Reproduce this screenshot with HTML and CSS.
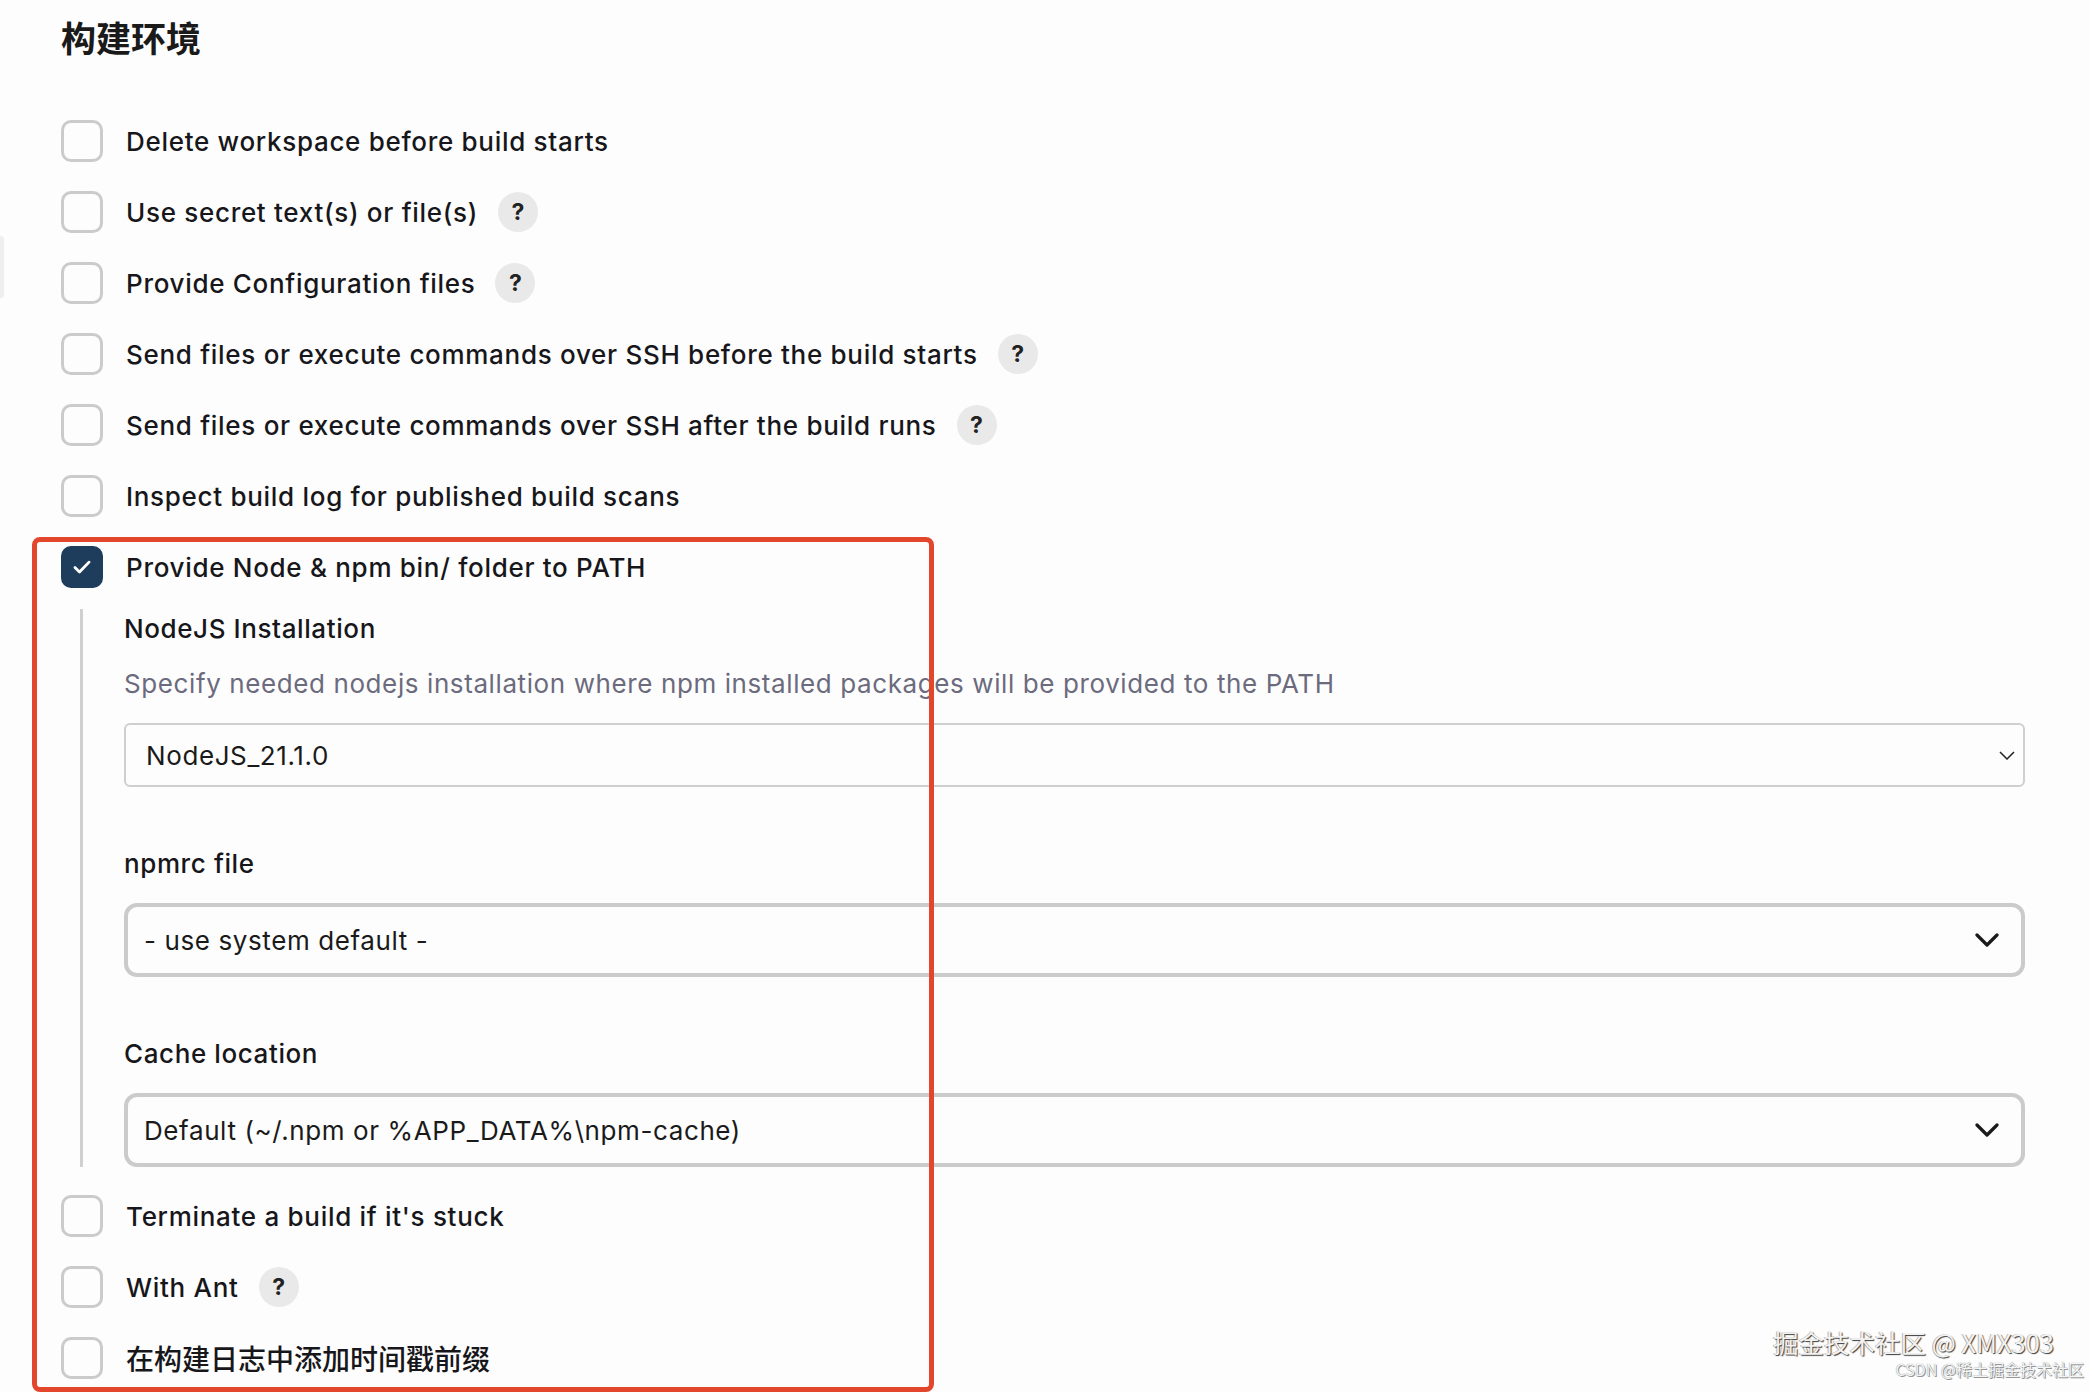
FILE: index.html
```html
<!DOCTYPE html>
<html lang="zh-CN">
<head>
<meta charset="utf-8">
<title>构建环境</title>
<link rel="stylesheet" href="styles.css">
</head>
<body>
<div class="edge"></div>
<main class="page">
  <h1 class="title">构建环境</h1>
  <div class="options">
    <div class="row"><span class="box"></span><span class="label">Delete workspace before build starts</span></div>
    <div class="row"><span class="box"></span><span class="label">Use secret text(s) or file(s)</span><span class="help">?</span></div>
    <div class="row"><span class="box"></span><span class="label">Provide Configuration files</span><span class="help">?</span></div>
    <div class="row"><span class="box"></span><span class="label">Send files or execute commands over SSH before the build starts</span><span class="help">?</span></div>
    <div class="row"><span class="box"></span><span class="label">Send files or execute commands over SSH after the build runs</span><span class="help">?</span></div>
    <div class="row"><span class="box"></span><span class="label">Inspect build log for published build scans</span></div>
    <div class="row"><span class="box checked"><svg viewBox="0 0 24 24" width="26" height="26"><path d="M5.5 12.5l4.2 4.2 8.8-9.2" fill="none" stroke="#fff" stroke-width="2.6" stroke-linecap="round" stroke-linejoin="round"/></svg></span><span class="label">Provide Node &amp; npm bin/ folder to PATH</span></div>
  </div>
  <div class="nested">
    <div class="field-label">NodeJS Installation</div>
    <div class="desc">Specify needed nodejs installation where npm installed packages will be provided to the PATH</div>
    <div class="select thin"><span>NodeJS_21.1.0</span><svg viewBox="0 0 16 9" width="16" height="9"><path d="M1 1l7 7 7-7" fill="none" stroke="#222" stroke-width="1.5"/></svg></div>
    <div class="field-label gap">npmrc file</div>
    <div class="select thick"><span>- use system default -</span><svg viewBox="0 0 24 14" width="24" height="14"><path d="M2 2l10 10 10-10" fill="none" stroke="#1a1a1a" stroke-width="3.2" stroke-linecap="round" stroke-linejoin="round"/></svg></div>
    <div class="field-label gap">Cache location</div>
    <div class="select thick"><span>Default (~/.npm or %APP_DATA%\npm-cache)</span><svg viewBox="0 0 24 14" width="24" height="14"><path d="M2 2l10 10 10-10" fill="none" stroke="#1a1a1a" stroke-width="3.2" stroke-linecap="round" stroke-linejoin="round"/></svg></div>
  </div>
  <div class="options after">
    <div class="row"><span class="box"></span><span class="label">Terminate a build if it's stuck</span></div>
    <div class="row"><span class="box"></span><span class="label">With Ant</span><span class="help">?</span></div>
    <div class="row"><span class="box"></span><span class="label cjk">在构建日志中添加时间戳前缀</span></div>
  </div>
</main>
<div class="highlight"></div>
<div class="watermark">
  <div class="wm-main">掘金技术社区 @ XMX303</div>
  <div class="wm-sub">CSDN @稀土掘金技术社区</div>
</div>
</body>
</html>
```
FILE: styles.css
```css
html, body {
  margin: 0;
  padding: 0;
  background: #fdfdfd;
}
body {
  width: 2090px;
  height: 1392px;
  overflow: hidden;
  position: relative;
  font-family: Inter, "Noto Sans", "Noto Sans CJK SC", sans-serif;
  color: #1b1b1f;
}
.page {
  padding-left: 61px;
  padding-right: 65px;
}
.title {
  margin: 0;
  padding-top: 15px;
  font-family: "Noto Sans CJK SC", sans-serif;
  font-size: 35px;
  line-height: 44px;
  font-weight: 700;
  color: #1a1a1a;
  margin-bottom: 61px;
}
.options {
  display: flex;
  flex-direction: column;
  gap: 29px;
}
.options.after {
  margin-top: 28px;
}
.row {
  display: flex;
  align-items: center;
  height: 42px;
}
.box {
  box-sizing: border-box;
  width: 42px;
  height: 42px;
  border: 3px solid #cbcbcb;
  border-radius: 10px;
  background: #fdfdfd;
  flex: none;
  display: flex;
  align-items: center;
  justify-content: center;
}
.box.checked {
  border-color: #1e3c5c;
  background: #1e3c5c;
}
.label {
  margin-left: 23px;
  font-size: 26px;
  font-weight: 500;
  letter-spacing: 0.7px;
  color: #17171b;
}
.label.cjk {
  font-family: "Noto Sans CJK SC", sans-serif;
  font-size: 28px;
  letter-spacing: 0;
  font-weight: 500;
}
.help {
  margin-left: 20px;
  width: 40px;
  height: 40px;
  border-radius: 50%;
  background: #e9e9ea;
  display: flex;
  align-items: center;
  justify-content: center;
  font-size: 23px;
  font-weight: 700;
  color: #222;
  flex: none;
}
.nested {
  margin-top: 21px;
  margin-left: 19px;
  border-left: 3px solid #d0d0d0;
  padding-left: 41px;
  padding-top: 2px;
}
.field-label {
  font-size: 26px;
  font-weight: 500;
  letter-spacing: 0.6px;
  line-height: 36px;
  color: #17171b;
}
.field-label.gap {
  margin-top: 59px;
}
.desc {
  margin-top: 19px;
  font-size: 26px;
  letter-spacing: 0.6px;
  line-height: 36px;
  color: #6b6b7d;
}
.select {
  box-sizing: border-box;
  display: flex;
  align-items: center;
  justify-content: space-between;
  background: #fdfdfd;
  font-size: 26px;
  letter-spacing: 0.6px;
  color: #1a1a1a;
}
.select.thin {
  margin-top: 21px;
  height: 64px;
  border: 2px solid #cfcfcf;
  border-radius: 6px;
  padding: 0 8px 0 20px;
}
.select.thick {
  margin-top: 21px;
  height: 74px;
  border: 4px solid #cbcbcb;
  border-radius: 13px;
  padding: 0 22px 0 16px;
}
.highlight {
  position: absolute;
  left: 32px;
  top: 537px;
  width: 902px;
  height: 855px;
  box-sizing: border-box;
  border: 5px solid #e2472d;
  border-radius: 8px;
  pointer-events: none;
}
.edge {
  position: absolute;
  left: 0;
  top: 236px;
  width: 4px;
  height: 62px;
  background: #efeff1;
  border-radius: 0 3px 3px 0;
}
.watermark {
  position: absolute;
  right: 6px;
  bottom: 13px;
  display: flex;
  flex-direction: column;
  align-items: flex-end;
  font-family: "Noto Sans CJK SC", sans-serif;
}
.wm-main {
  margin-right: 30px;
  font-size: 25.5px;
  line-height: 30px;
  color: #f2f2f2;
  text-shadow: 1px 1px 1px #3a3a3a, -1px 0 0 #bbb;
}
.wm-sub {
  margin-top: 2px;
  font-size: 16px;
  line-height: 20px;
  color: #f5f5f5;
  text-shadow: 0 0 1px #777, 1px 1px 0 #999;
}
```
